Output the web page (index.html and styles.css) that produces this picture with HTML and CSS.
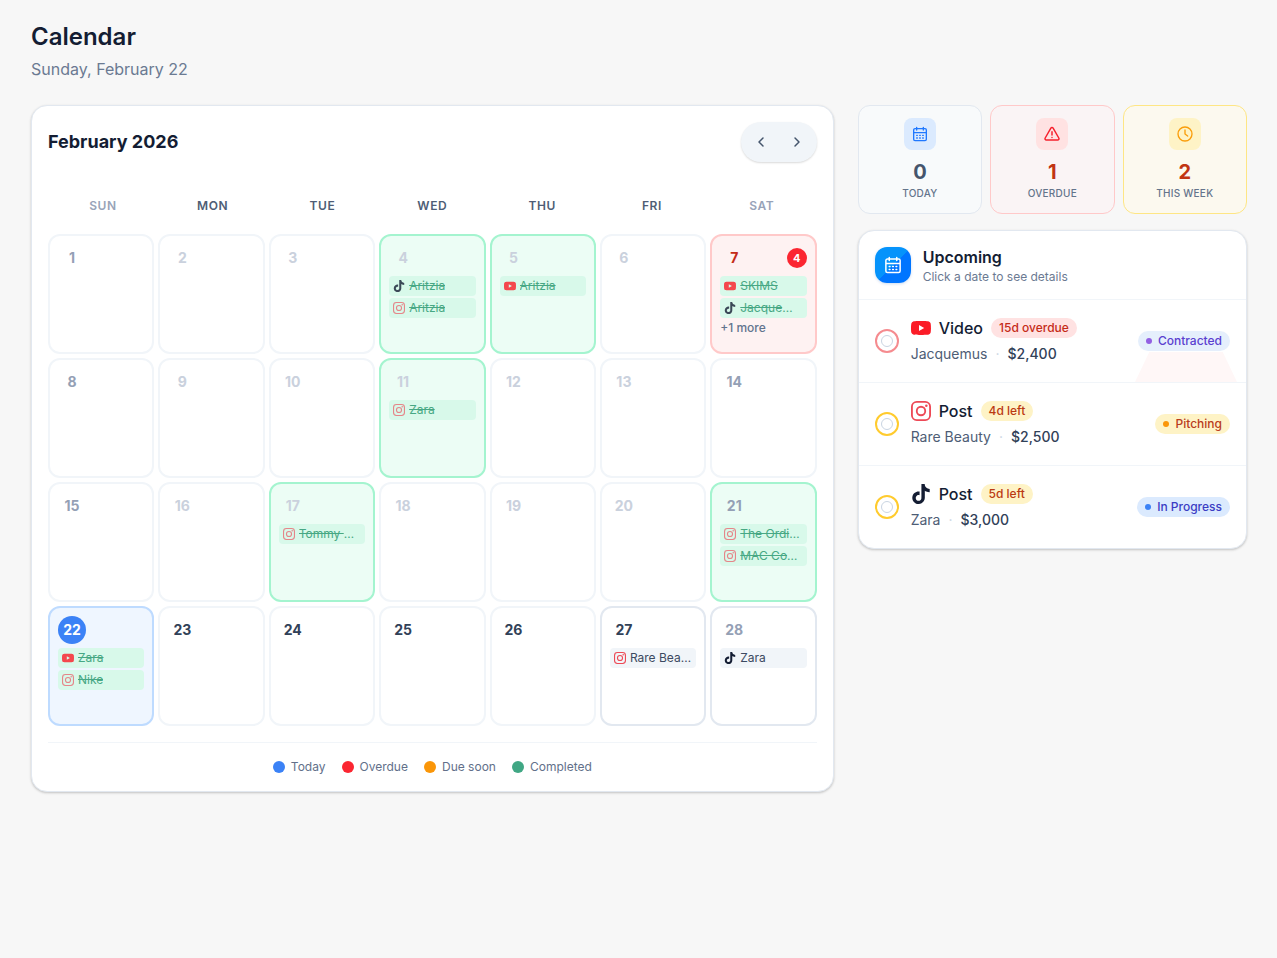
FILE: index.html
```html
<!DOCTYPE html>
<html lang="en">
<head>
<meta charset="utf-8">
<meta name="viewport" content="width=device-width, initial-scale=1">
<title>Calendar</title>
<link rel="stylesheet" href="styles.css">
</head>
<body>
<svg class="sprite" aria-hidden="true">
  <symbol id="tiktok" viewBox="0 0 24 24"><path fill="currentColor" d="M12.525.02c1.31-.02 2.61-.01 3.91-.02.08 1.53.63 3.09 1.75 4.17 1.12 1.11 2.7 1.62 4.24 1.79v4.03c-1.44-.05-2.89-.35-4.2-.97-.57-.26-1.1-.59-1.62-.93-.01 2.92.01 5.84-.02 8.75-.08 1.4-.54 2.79-1.35 3.94-1.31 1.92-3.58 3.17-5.91 3.21-1.43.08-2.86-.31-4.08-1.03-2.02-1.19-3.44-3.37-3.65-5.71-.02-.5-.03-1-.01-1.49.18-1.9 1.12-3.72 2.58-4.96 1.66-1.44 3.98-2.13 6.15-1.72.02 1.48-.04 2.96-.04 4.44-.99-.32-2.15-.23-3.02.37-.63.41-1.11 1.04-1.36 1.75-.21.51-.15 1.07-.14 1.61.24 1.64 1.82 3.02 3.5 2.87 1.12-.01 2.19-.66 2.77-1.61.19-.33.4-.67.41-1.06.1-1.79.06-3.57.07-5.36.01-4.03-.01-8.05.02-12.07z"/></symbol>
  <symbol id="instagram" viewBox="0 0 24 24"><g fill="none" stroke="currentColor" stroke-width="2.2"><rect x="1.1" y="1.1" width="21.8" height="21.8" rx="5.8"/><circle cx="12" cy="12" r="5.1"/></g><circle cx="18.4" cy="5.6" r="1.5" fill="currentColor"/></symbol>
  <symbol id="youtube" viewBox="0 0 24 24"><path fill="currentColor" fill-rule="evenodd" d="M23.5 6.2a3 3 0 0 0-2.1-2.1C19.5 3.6 12 3.6 12 3.6s-7.5 0-9.4.5A3 3 0 0 0 .5 6.2C0 8.1 0 12 0 12s0 3.9.5 5.8a3 3 0 0 0 2.1 2.1c1.9.5 9.4.5 9.4.5s7.5 0 9.4-.5a3 3 0 0 0 2.1-2.1c.5-1.9.5-5.8.5-5.8s0-3.9-.5-5.8zM9.6 15.6V8.4l6.2 3.6z"/></symbol>
  <symbol id="calendar" viewBox="0 0 24 24"><path fill="none" stroke="currentColor" stroke-width="2" stroke-linecap="round" stroke-linejoin="round" d="M7 2v4M17 2v4M4.5 4h15A2 2 0 0 1 21.5 6v14a2 2 0 0 1-2 2h-15a2 2 0 0 1-2-2V6a2 2 0 0 1 2-2zM2.5 10h19M7 14h1M11.5 14h1M16 14h1M7 18h1M11.5 18h1M16 18h1"/></symbol>
  <symbol id="warning" viewBox="0 0 24 24"><path fill="none" stroke="currentColor" stroke-width="2.2" stroke-linecap="round" stroke-linejoin="round" d="M10.3 3.2 1.8 18a2 2 0 0 0 1.7 3h17a2 2 0 0 0 1.7-3L13.7 3.2a2 2 0 0 0-3.4 0zM12 8.5v5M12 17.2v.1"/></symbol>
  <symbol id="clock" viewBox="0 0 24 24"><g fill="none" stroke="currentColor" stroke-width="2" stroke-linecap="round" stroke-linejoin="round"><circle cx="12" cy="12" r="10.5"/><path d="M12 6v6l4 3"/></g></symbol>
  <symbol id="left" viewBox="0 0 24 24"><path fill="none" stroke="currentColor" stroke-width="2.2" stroke-linecap="round" stroke-linejoin="round" d="m15 18-6-6 6-6"/></symbol>
  <symbol id="right" viewBox="0 0 24 24"><path fill="none" stroke="currentColor" stroke-width="2.2" stroke-linecap="round" stroke-linejoin="round" d="m9 18 6-6-6-6"/></symbol>
</svg>

<main class="page">
  <header class="page-header">
    <h1>Calendar</h1>
    <p>Sunday, February 22</p>
  </header>

  <div class="layout">
    <section class="card month" aria-labelledby="month-title">
      <div class="month-header">
        <h2 id="month-title">February 2026</h2>
        <div class="month-nav">
          <button type="button" aria-label="Previous month"><svg><use href="#left"/></svg></button>
          <button type="button" aria-label="Next month"><svg><use href="#right"/></svg></button>
        </div>
      </div>

      <div class="weekdays">
        <span class="weekend">SUN</span><span>MON</span><span>TUE</span><span>WED</span><span>THU</span><span>FRI</span><span class="weekend">SAT</span>
      </div>

      <div class="days">
        <button type="button" class="day weekend"><span class="num">1</span></button>
        <button type="button" class="day past"><span class="num">2</span></button>
        <button type="button" class="day past"><span class="num">3</span></button>
        <button type="button" class="day past done">
          <span class="num">4</span>
          <span class="chip"><svg class="tt"><use href="#tiktok"/></svg><span class="name">Aritzia</span></span>
          <span class="chip"><svg class="ig"><use href="#instagram"/></svg><span class="name">Aritzia</span></span>
        </button>
        <button type="button" class="day past done">
          <span class="num">5</span>
          <span class="chip"><svg class="yt"><use href="#youtube"/></svg><span class="name">Aritzia</span></span>
        </button>
        <button type="button" class="day past"><span class="num">6</span></button>
        <button type="button" class="day overdue">
          <span class="day-top"><span class="num">7</span><span class="count">4</span></span>
          <span class="chip"><svg class="yt"><use href="#youtube"/></svg><span class="name">SKIMS</span></span>
          <span class="chip"><svg class="tt"><use href="#tiktok"/></svg><span class="name">Jacquemus</span></span>
          <span class="more">+1 more</span>
        </button>

        <button type="button" class="day weekend"><span class="num">8</span></button>
        <button type="button" class="day past"><span class="num">9</span></button>
        <button type="button" class="day past"><span class="num">10</span></button>
        <button type="button" class="day past done">
          <span class="num">11</span>
          <span class="chip"><svg class="ig"><use href="#instagram"/></svg><span class="name">Zara</span></span>
        </button>
        <button type="button" class="day past"><span class="num">12</span></button>
        <button type="button" class="day past"><span class="num">13</span></button>
        <button type="button" class="day weekend"><span class="num">14</span></button>

        <button type="button" class="day weekend"><span class="num">15</span></button>
        <button type="button" class="day past"><span class="num">16</span></button>
        <button type="button" class="day past done">
          <span class="num">17</span>
          <span class="chip"><svg class="ig"><use href="#instagram"/></svg><span class="name">Tommy Hilfiger</span></span>
        </button>
        <button type="button" class="day past"><span class="num">18</span></button>
        <button type="button" class="day past"><span class="num">19</span></button>
        <button type="button" class="day past"><span class="num">20</span></button>
        <button type="button" class="day weekend done">
          <span class="num">21</span>
          <span class="chip"><svg class="ig"><use href="#instagram"/></svg><span class="name">The Ordinary</span></span>
          <span class="chip"><svg class="ig"><use href="#instagram"/></svg><span class="name">MAC Cosmetics</span></span>
        </button>

        <button type="button" class="day today" aria-current="date">
          <span class="num">22</span>
          <span class="chip"><svg class="yt"><use href="#youtube"/></svg><span class="name">Zara</span></span>
          <span class="chip"><svg class="ig"><use href="#instagram"/></svg><span class="name">Nike</span></span>
        </button>
        <button type="button" class="day"><span class="num">23</span></button>
        <button type="button" class="day"><span class="num">24</span></button>
        <button type="button" class="day"><span class="num">25</span></button>
        <button type="button" class="day"><span class="num">26</span></button>
        <button type="button" class="day planned">
          <span class="num">27</span>
          <span class="chip"><svg class="ig"><use href="#instagram"/></svg><span class="name">Rare Beauty</span></span>
        </button>
        <button type="button" class="day weekend planned">
          <span class="num">28</span>
          <span class="chip"><svg class="tt"><use href="#tiktok"/></svg><span class="name">Zara</span></span>
        </button>
      </div>

      <ul class="legend">
        <li class="l-today">Today</li>
        <li class="l-overdue">Overdue</li>
        <li class="l-soon">Due soon</li>
        <li class="l-done">Completed</li>
      </ul>
    </section>

    <aside class="side">
      <div class="stats">
        <div class="stat s-today"><span class="stat-icon"><svg><use href="#calendar"/></svg></span><strong>0</strong><span class="stat-label">TODAY</span></div>
        <div class="stat s-overdue"><span class="stat-icon"><svg><use href="#warning"/></svg></span><strong>1</strong><span class="stat-label">OVERDUE</span></div>
        <div class="stat s-week"><span class="stat-icon"><svg><use href="#clock"/></svg></span><strong>2</strong><span class="stat-label">THIS WEEK</span></div>
      </div>

      <section class="card upcoming" aria-labelledby="upcoming-title">
        <header class="upcoming-header">
          <span class="upcoming-icon"><svg><use href="#calendar"/></svg></span>
          <div>
            <h2 id="upcoming-title">Upcoming</h2>
            <p>Click a date to see details</p>
          </div>
        </header>
        <ul class="items">
          <li class="item late">
            <button type="button" class="check" aria-label="Complete Jacquemus video"></button>
            <div class="item-body">
              <div class="item-title"><svg class="yt"><use href="#youtube"/></svg><h3>Video</h3><span class="due">15d overdue</span></div>
              <div class="item-meta"><span>Jacquemus</span><i>·</i><b>$2,400</b></div>
            </div>
            <span class="status contracted">Contracted</span>
          </li>
          <li class="item">
            <button type="button" class="check" aria-label="Complete Rare Beauty post"></button>
            <div class="item-body">
              <div class="item-title"><svg class="ig"><use href="#instagram"/></svg><h3>Post</h3><span class="due">4d left</span></div>
              <div class="item-meta"><span>Rare Beauty</span><i>·</i><b>$2,500</b></div>
            </div>
            <span class="status pitching">Pitching</span>
          </li>
          <li class="item">
            <button type="button" class="check" aria-label="Complete Zara post"></button>
            <div class="item-body">
              <div class="item-title"><svg class="tt"><use href="#tiktok"/></svg><h3>Post</h3><span class="due">5d left</span></div>
              <div class="item-meta"><span>Zara</span><i>·</i><b>$3,000</b></div>
            </div>
            <span class="status progress">In Progress</span>
          </li>
        </ul>
      </section>
    </aside>
  </div>
</main>
</body>
</html>
```
FILE: styles.css
```css
*, *::before, *::after { box-sizing: border-box; margin: 0; padding: 0; }
body { background: #f7f7f7; color: #141d33; font: 16px/24px Inter, "Liberation Sans", sans-serif; }
button { font: inherit; color: inherit; background: none; border: 0; cursor: pointer; }
ul { list-style: none; }
svg { display: block; flex-shrink: 0; }
.sprite { display: none; }

.page { padding: 21px 30px 32px 31px; }
.page-header { margin-bottom: 24px; }
.page-header h1 { font-size: 24px; line-height: 32px; font-weight: 600; }
.page-header p { margin-top: 4px; color: #6b7a92; }
.layout { display: grid; grid-template-columns: repeat(3, minmax(0, 1fr)); gap: 24px; align-items: start; }
.card { background: #fff; border: 1px solid #e2e8f0; border-radius: 16px; box-shadow: 0 1px 3px rgba(0, 0, 0, .12), 0 1px 2px rgba(0, 0, 0, .1); }

.month { grid-column: span 2; padding: 16px; }
.month-header { display: flex; align-items: center; justify-content: space-between; }
.month-header h2 { font-size: 18px; line-height: 28px; font-weight: 700; }
.month-nav { display: flex; padding: 2px; border-radius: 20px; background: #f1f5f9; box-shadow: 0 1px 2px rgba(0, 0, 0, .15); }
.month-nav button { width: 36px; height: 36px; display: grid; place-items: center; color: #45556c; }
.month-nav svg { width: 16px; height: 16px; }

.weekdays { display: grid; grid-template-columns: repeat(7, minmax(0, 1fr)); margin-top: 24px; padding: 12px 0; font-size: 12px; line-height: 16px; font-weight: 600; letter-spacing: .05em; text-align: center; color: #4e5d75; }
.weekdays .weekend { color: #98a3b8; }
.days { display: grid; grid-template-columns: repeat(7, minmax(0, 1fr)); grid-auto-rows: minmax(120px, auto); gap: 4px; margin-top: 8px; }
.day { display: flex; flex-direction: column; gap: 2px; padding: 8px; border: 2px solid #f1f5f9; border-radius: 12px; text-align: left; color: #314158; }
.num { width: 28px; height: 28px; font-size: 14px; line-height: 28px; font-weight: 700; text-align: center; }
.day > .num, .day-top { margin-bottom: 2px; }
.past .num { color: #cad1dd; }
.weekend .num { color: #94a0b5; }
.chip { display: flex; align-items: center; gap: 4px; height: 20px; padding: 0 4px; border-radius: 4px; background: #f1f5f9; font-size: 12px; line-height: 16px; color: #3c4a61; }
.chip svg { width: 12px; height: 12px; }
.name { min-width: 0; overflow: hidden; white-space: nowrap; text-overflow: ellipsis; }
.done { background: #ecfdf5; border-color: #a4f4cf; }
.done .chip, .overdue .chip, .today .chip { background: #d8f9ea; color: #47a884; }
.done .name, .overdue .name, .today .name { text-decoration: line-through; }
.done svg, .overdue svg, .today svg { opacity: .8; }
.done .ig, .overdue .ig, .today .ig { opacity: .65; }
.overdue { background: #fef2f2; border-color: #ffc9c9; }
.overdue .num { color: #c52b18; }
.day-top { display: flex; align-items: center; justify-content: space-between; }
.count { width: 20px; height: 20px; border-radius: 10px; background: #fb2631; color: #fff; font-size: 11px; line-height: 20px; font-weight: 700; text-align: center; }
.more { font-size: 12px; line-height: 16px; color: #62748e; font-weight: 500; }
.today { background: #eff6ff; border-color: #bedbff; }
.today .num { background: #3b82f6; border-radius: 14px; color: #fff; }
.planned { border-color: #e2e8f0; }
.tt { color: #141d33; }
.ig { color: #ed4956; }
.yt { color: #fb1c27; }

.legend { display: flex; justify-content: center; gap: 16px; margin-top: 16px; padding-top: 16px; border-top: 1px solid #f1f5f9; font-size: 12px; line-height: 16px; color: #62708a; }
.legend li { display: flex; align-items: center; gap: 6px; }
.legend li::before { content: ""; width: 12px; height: 12px; border-radius: 6px; background: #3b82f6; }
.legend .l-overdue::before { background: #fb2631; }
.legend .l-soon::before { background: #fa9608; }
.legend .l-done::before { background: #40a784; }

.side { display: grid; gap: 16px; }
.stats { display: grid; grid-template-columns: repeat(3, minmax(0, 1fr)); gap: 8px; }
.stat { display: flex; flex-direction: column; align-items: center; padding: 12px; border: 1px solid #e2e8f0; border-radius: 12px; background: #f8fafb; }
.stat-icon { width: 32px; height: 32px; display: grid; place-items: center; margin-bottom: 8px; border-radius: 8px; background: #dbeafe; color: #1f78ff; }
.stat-icon svg { width: 16px; height: 16px; }
.stat strong { font-size: 20px; line-height: 28px; font-weight: 700; color: #45556c; }
.stat-label { font-size: 10px; line-height: 15px; font-weight: 500; letter-spacing: .025em; color: #64748b; }
.s-overdue { background: #faf4f5; border-color: #ffc9c9; }
.s-overdue .stat-icon { background: #ffe2e2; color: #f6202d; }
.s-overdue strong, .s-week strong { color: #c13512; }
.s-week { background: #fcf9ef; border-color: #fee685; }
.s-week .stat-icon { background: #fef3c6; color: #fa9d0a; }

.upcoming { overflow: hidden; }
.upcoming-header { display: flex; align-items: center; gap: 12px; padding: 14px 16px; }
.upcoming-icon { width: 36px; height: 36px; display: grid; place-items: center; border-radius: 12px; background: linear-gradient(135deg, #0593fb 50%, #0075ff 50%); color: #fff; box-shadow: 0 1px 3px rgba(0, 80, 180, .2); }
.upcoming-icon svg { width: 18px; height: 18px; }
.upcoming-header h2 { font-size: 16px; line-height: 24px; font-weight: 600; }
.upcoming-header p { font-size: 12px; line-height: 16px; color: #6b7a92; }
.item { position: relative; display: flex; align-items: center; gap: 12px; padding: 16px; border-top: 1px solid #f1f5f9; }
.check { width: 24px; height: 24px; display: grid; place-items: center; flex-shrink: 0; border: 2px solid #ffcb2e; border-radius: 12px; }
.check::before { content: ""; width: 12px; height: 12px; border: 1px solid #cad5e2; border-radius: 6px; }
.late .check { border-color: #f58b8f; }
.item-body { flex: 1; min-width: 0; }
.item-title { display: flex; align-items: center; gap: 8px; }
.item-title svg { width: 20px; height: 20px; }
.item-title h3 { font-size: 16px; line-height: 24px; font-weight: 500; }
.due { padding: 2px 8px; border-radius: 10px; background: #fef3c6; color: #bb3a12; font-size: 12px; line-height: 16px; font-weight: 500; }
.late .due { background: #ffe2e2; color: #c52b18; }
.item-meta { display: flex; gap: 8px; margin-top: 2px; font-size: 14px; line-height: 24px; color: #4e5d75; }
.item-meta i { font-style: normal; color: #cad5e2; }
.item-meta b { font-weight: 500; color: #314158; }
.late::after { content: ""; position: absolute; right: 9px; bottom: 0; width: 102px; height: 30px; background: #fff7f7; clip-path: polygon(14% 0, 86% 0, 100% 100%, 0 100%); }
.status { display: flex; align-items: center; gap: 6px; padding: 2px 8px; border-radius: 10px; font-size: 12px; line-height: 16px; font-weight: 500; white-space: nowrap; }
.status::before { content: ""; width: 6px; height: 6px; border-radius: 3px; background: currentColor; }
.contracted { background: #e5effc; color: #5b3fd0; }
.contracted::before { background: #9360e3; }
.pitching { background: #fef3c6; color: #b93c1c; }
.pitching::before { background: #fa9608; }
.progress { background: #dbeafe; color: #3b3dc4; }
.progress::before { background: #3b82f6; }
```
